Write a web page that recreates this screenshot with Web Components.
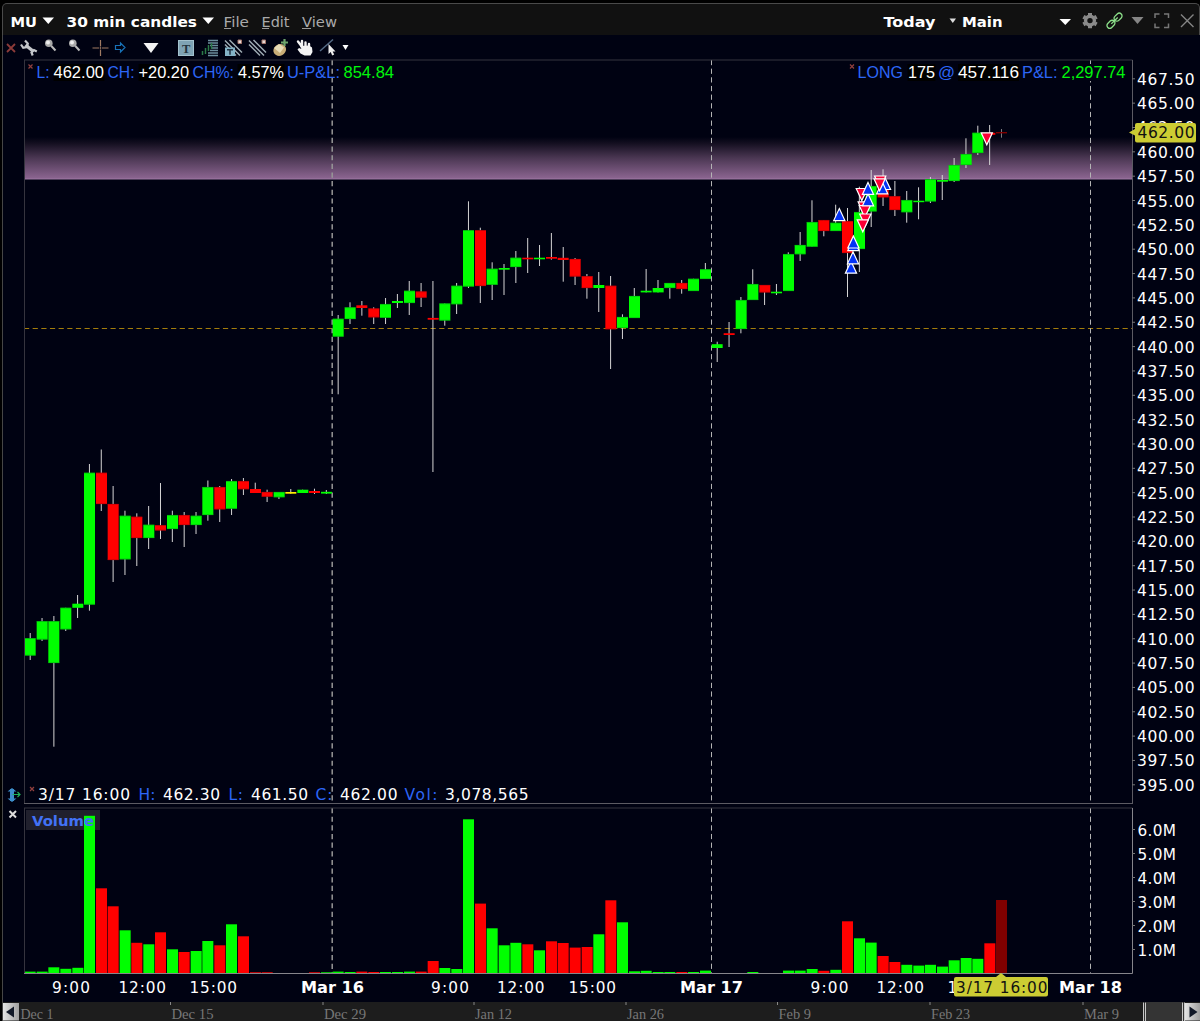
<!DOCTYPE html>
<html lang="en">
<head>
<meta charset="utf-8">
<title>MU 30 min candles</title>
<style>
html, body {
    margin: 0;
    background: #000;
    overflow: hidden;
}
</style>
</head>
<body>
<chart-window>
    <title-bar slot="title"></title-bar>
    <tool-bar slot="tools"></tool-bar>
    <price-pane slot="price"></price-pane>
    <volume-pane slot="volume"></volume-pane>
    <time-axis slot="time"></time-axis>
    <range-strip slot="range"></range-strip>
</chart-window>

<script>
// first candle centre and distance between candles
const X0 = 30.2;
const STEP = 11.845;

const SANS = "'DejaVu Sans', Verdana, sans-serif";
const ARIAL = "'Liberation Sans', Arial, sans-serif";

// [colour, body top, body bottom, high, low, volume bar height]
const candles = [
    ["g", 638.2, 655.5, 633, 660, 1.7],
    ["g", 621.2, 639.5, 618, 641, 1.7],
    ["g", 621.2, 663, 616, 746.7, 6],
    ["g", 607.8, 629.3, 607.8, 631, 4.5],
    ["g", 603.7, 607.8, 595, 618, 5.5],
    ["g", 472.8, 604.6, 464, 610.7, 157.5],
    ["r", 472.8, 504, 449.5, 511, 85],
    ["r", 504, 560, 486, 582, 67],
    ["g", 515.8, 559.3, 510.7, 575, 43],
    ["r", 516.8, 538, 513.3, 566, 30.5],
    ["g", 524.8, 538, 506, 549, 29],
    ["r", 525.2, 530.4, 483, 539, 41],
    ["g", 515.1, 529, 510.7, 542, 24],
    ["r", 515.1, 525, 512, 547, 21.3],
    ["g", 515.8, 525, 512, 534, 22.3],
    ["g", 487.1, 515, 480.5, 520.7, 32.3],
    ["r", 487.1, 509.3, 486, 522, 28],
    ["g", 481.1, 508.7, 479, 515, 49],
    ["r", 481.1, 489.2, 478, 495, 37],
    ["r", 489, 493, 482.7, 493, 1],
    ["r", 492, 496.7, 489.7, 502, 1],
    ["g", 492, 497.2, 492, 499, 0],
    ["y", 492, 493.7, 489, 493.7, 0],
    ["g", 489.7, 493, 489.7, 493, 0],
    ["r", 491, 493, 488.7, 494, 1],
    ["g", 491.8, 493.6, 490, 494, 1],
    ["g", 318.8, 336.6, 315, 394.3, 1.7],
    ["g", 307.4, 319, 302.3, 324, 1.3],
    ["r", 305.3, 308, 301, 315.7, 1.7],
    ["r", 308.5, 317.3, 307.3, 324, 1.3],
    ["g", 304.1, 317.8, 298, 324, 1.3],
    ["g", 301, 303, 294, 308, 1.3],
    ["g", 290.8, 303, 281, 315, 1.7],
    ["r", 291.5, 297.6, 283, 307, 1.7],
    ["r", 317.9, 319.7, 281, 472, 12.3],
    ["g", 303.5, 320.5, 303.5, 325.7, 5.3],
    ["g", 285.8, 304.2, 283, 314, 4.3],
    ["g", 230.2, 286.5, 201.3, 288, 154],
    ["r", 230.2, 286, 227.7, 303, 69.7],
    ["g", 268.8, 284.8, 262.3, 300, 45],
    ["g", 268, 269.7, 264, 295, 28],
    ["g", 257.8, 267, 251, 283, 30.5],
    ["r", 257.7, 259.3, 238, 273, 29],
    ["g", 257.7, 259.3, 245, 266, 23],
    ["r", 257, 258.7, 233, 259.7, 32],
    ["r", 257.8, 260, 247, 281.7, 30.3],
    ["r", 259, 276.5, 258, 285, 25.7],
    ["r", 276.2, 288, 274, 298.7, 26.3],
    ["g", 285, 288, 272, 312, 39],
    ["r", 285.8, 329.2, 276, 369, 73],
    ["g", 317, 328, 314.3, 339, 51],
    ["g", 296, 318, 288, 318, 2],
    ["g", 290.7, 292.4, 269, 292.4, 2.5],
    ["g", 288, 292.4, 280, 292.4, 1.3],
    ["g", 283, 288, 283, 298.7, 1.3],
    ["r", 283, 289, 280, 293.7, 1.3],
    ["g", 278.8, 291, 278.8, 291, 1.3],
    ["g", 269.3, 279, 263, 279, 2.7],
    ["g", 344.2, 348, 341.7, 362, 0],
    ["r", 333.2, 335, 322, 347, 0],
    ["g", 300.1, 329, 297, 333.3, 0],
    ["g", 284.1, 300, 269.3, 300, 1.3],
    ["r", 285, 292.4, 285, 305, 0],
    ["g", 291.7, 293.3, 284, 295, 0],
    ["g", 254.1, 291, 252.3, 291, 2.7],
    ["g", 245, 254.2, 232, 261, 2.7],
    ["g", 222.1, 246.7, 200.3, 246.7, 4.3],
    ["r", 220.1, 231, 220.1, 236.3, 2.5],
    ["g", 222.8, 231, 204.7, 231, 3.5],
    ["r", 221.1, 253, 208, 297, 52],
    ["g", 212.1, 249, 186.7, 272, 35],
    ["g", 186.1, 211.4, 170, 227, 30.7],
    ["r", 184.5, 197.3, 169.3, 206, 17.3],
    ["r", 196.2, 210, 181, 216, 11.3],
    ["g", 200.1, 212.2, 191, 222.7, 8.5],
    ["g", 200.7, 202.2, 187.3, 219.3, 7.7],
    ["g", 179.3, 201.4, 177, 203, 8.5],
    ["g", 180, 181.7, 175, 200, 6.7],
    ["g", 165.1, 181, 158, 182, 13],
    ["g", 154.1, 165, 138.3, 168, 15.3],
    ["g", 132.8, 153, 125.7, 155, 14.5],
    ["r", 132.8, 134.8, 125, 165, 30],
    ["d", 132, 133.4, 129, 137.7, 73.3]
];

const fills = { g: "#00ff00", r: "#ff0000", y: "#ffee00", d: "#800000" };
const edges = { g: "#00ab10", r: "#b00008", y: "#c8b400", d: "#800000" };

// executed orders: [side, centre x, top]
const trades = [
    ["sell", 861.8, 188.5], ["sell", 863.7, 201.8], ["sell", 864.8, 205.5],
    ["sell", 865.3, 214], ["sell", 862.8, 219.8],
    ["buy", 868, 193.8], ["buy", 868, 182.4],
    ["buy", 885, 177.5], ["buy", 882.2, 181.8],
    ["sell", 880.2, 176], ["sell", 879.6, 178.8],
    ["buy", 839.3, 208.6], ["buy", 851, 261.2], ["buy", 853, 251.8],
    ["buy", 853.4, 238.6], ["buy", 853.4, 236],
    ["sell", 986.8, 132.8]
];

const dayLines = [332.2, 711.5, 1090.5];

const label = (x, y, w, txt, fill = "#fff", extra = "") =>
    `<text x="${x}" y="${y}" textLength="${w}" lengthAdjust="spacingAndGlyphs" fill="${fill}" ${extra}>${txt}</text>`;

// keeps the glyph width and only opens the spacing
const spaced = (x, y, w, txt, fill = "#fff") =>
    `<text x="${x}" y="${y}" textLength="${w}" fill="${fill}">${txt}</text>`;

const verticals = (y1, y2) => dayLines.map((x, i) =>
    `<line x1="${x}" x2="${x}" y1="${y1}" y2="${y2}" stroke="${i ? "#b4b4b4" : "#979797"}" stroke-width="${i ? 1 : 1.5}" stroke-dasharray="5.2 3.45"/>`
).join("");

const closeMark = (x, y, s = 4, c = "#91403f") =>
    `<path d="M${x} ${y}l${s} ${s}m0 -${s}l-${s} ${s}" stroke="${c}" stroke-width="1.2" fill="none"/>`;

const barLeft = (i) => Math.round((X0 + STEP * i - 5.4) * 3) / 3;

class ChartWindow extends HTMLElement {
    constructor() {
        super();
        this.attachShadow({ mode: "open" }).innerHTML = `
        <style>
        :host {
            display: grid;
            grid-template-rows: 31px 24px 746px 169px 28px 20px;
            box-sizing: border-box;
            width: 1200px;
            height: 1021px;
            padding-top: 3px;
            background: linear-gradient(90deg, #000 2px, #464646 2px, #464646 3px, #000212 3px);
            box-shadow: inset 0 3px #000;
            overflow: hidden;
        }
        </style>
        <slot name="title"></slot>
        <slot name="tools"></slot>
        <slot name="price"></slot>
        <slot name="volume"></slot>
        <slot name="time"></slot>
        <slot name="range"></slot>
        `;
    }
}
customElements.define("chart-window", ChartWindow);

class TitleBar extends HTMLElement {
    constructor() {
        super();
        this.attachShadow({ mode: "open" }).innerHTML = `
        <style>
        :host {
            display: block;
            background: #000;
            height: 31px;
        }
        .bar {
            display: flex;
            align-items: center;
            box-sizing: border-box;
            margin-left: 2px;
            height: 32px;
            padding: 0 4px 0 8px;
            background: #111;
            border: 1px solid #4a4a4a;
            border-bottom: 0;
            border-radius: 5px 5px 0 0;
        }
        svg { display: block; flex: none; }
        text { font: 14.8px ${SANS}; }
        .b { font-weight: bold; }
        </style>
        <div class="bar">
            <svg width="330" height="30" viewBox="11 4 330 30">
                ${label(10.5, 25.5, 26.5, "MU", "#fff", 'class="b"')}
                <path d="M42.5 16.500h11.500l-5.700 6.500z" fill="#fff"/>
                ${label(66.5, 25.5, 130.5, "30 min candles", "#fff", 'class="b"')}
                <path d="M202.5 16.500h11.500l-5.700 6.500z" fill="#fff"/>
                ${label(223.5, 25.7, 25.5, "File", "#aaa")}
                ${label(261.5, 25.7, 28, "Edit", "#aaa")}
                ${label(302, 25.7, 35, "View", "#aaa")}
                <path d="M224 27.5h7M262 27.5h7M302 27.5h9" stroke="#999"/>
            </svg>
            <svg style="margin-left:auto" width="316" height="30" viewBox="879 4 316 30">
                ${label(883.5, 26, 52, "Today", "#fff", 'class="b"')}
                <path d="M949.5 17.5h6.5l-3.2 4.500z" fill="#ddd"/>
                ${label(962, 26, 40.5, "Main", "#fff", 'class="b"')}
                <path d="M1059.5 18h11.5l-5.7 6z" fill="#fff"/>
                <g transform="translate(1090 19.6)">
                    <circle r="4.4" fill="none" stroke="#8a8a8a" stroke-width="3.4"/>
                    <path d="M0 -5.5v-2.1M0 5.5v2.1M4.8 -2.75l1.8 -1.05M-4.8 2.75l-1.8 1.05M4.8 2.75l1.8 1.05M-4.8 -2.75l-1.8 -1.05" stroke="#8a8a8a" stroke-width="4"/>
                </g>
                <g transform="translate(1114.5 19.7) rotate(-45)" fill="none" stroke="#8ce08a" stroke-width="1.3">
                    <rect x="-9.5" y="-2.8" width="9" height="5.6" rx="2.8"/>
                    <rect x=".5" y="-2.8" width="9" height="5.6" rx="2.8"/>
                    <path d="M-4.5 0h9"/>
                </g>
                <path d="M1131.5 16h12l-6 7z" fill="#858585"/>
                <path d="M1155 17v-4h4.5M1164 13h4.5v4M1168.5 22.5v4h-4.5M1159.5 26.5h-4.5v-4" fill="none" stroke="#777" stroke-width="1.5"/>
                <path d="M1181 13.5l12.5 12.5M1193.5 13.5l-12.5 12.5" stroke="#858585" stroke-width="1.4"/>
            </svg>
        </div>
        `;
    }
}
customElements.define("title-bar", TitleBar);

class ToolBar extends HTMLElement {
    constructor() {
        super();
        this.attachShadow({ mode: "open" }).innerHTML = `
        <style>
        :host { display: flex; height: 24px; padding-left: 4px; }
        svg { display: block; flex: none; }
        </style>
        <svg width="360" height="24" viewBox="4 34 360 24" fill="none">
            <path d="M7 44l8 8M15 44l-8 8" stroke="#8c3b39" stroke-width="1.8"/>
            <path d="M25.5 45l8 6.500" stroke="#c4c7cb" stroke-width="3.4"/>
            <path d="M25 40.500l2.800 3 -.8 3.500 -3.800 .8 -2.200-3.300" stroke="#c4c7cb" stroke-width="2.2"/>
            <path d="M36.800 51.500l-2.800-1.500 -2.500 2.500 1.200 3" stroke="#c4c7cb" stroke-width="2.2"/>
            <g id="z1">
                <circle cx="48.8" cy="43.2" r="3.8" fill="#aaa"/>
                <circle cx="48" cy="42.5" r="2" fill="#ededed"/>
                <path d="M51.3 46l4.200 4.500" stroke="#bbb" stroke-width="2"/>
            </g>
            <use href="#z1" x="24"/>
            <path d="M92.5 48h6.5M102 48h6.5M100.5 40v6.5M100.500 49.500v6.500" stroke="#a07b63" stroke-width="1.2"/>
            <circle cx="100.5" cy="48" r=".8" fill="#c9a083"/>
            <path d="M115.5 45.500h5v-2.500l4.5 4.5 -4.5 4.500v-2.500h-5z" stroke="#1772b8" stroke-width="1.2"/>
            <path d="M143.500 43h15l-7.500 10z" fill="#f4f4f4"/>
            <rect x="178.500" y="40.500" width="15" height="15" fill="#7fa3b4" stroke="#a3c2ce"/>
            <text x="182" y="52.5" font-family="Liberation Serif, serif" font-weight="bold" font-size="12.5" fill="#23343d">T</text>
            <path d="M208 40.5h10M208 43h10M210 45.5h8M211 48h7M210 50.5h8M208 53h10M208 55.5h10" stroke="#6c8f9d" stroke-width="1.3"/>
            <path d="M202.5 51v4M205.5 48v6M208.5 45v6M211.5 43v6" stroke="#2b7a48" stroke-width="1.5"/>
            <g id="st" stroke="#9eabb3" stroke-width="1.5">
                <path d="M225 44.5l11 11M225 40.5l15 15M229.5 40l12.500 12.500"/>
                <path d="M238 40h3.500v3.500h-3.500z" stroke="#a5766c" stroke-width="1" fill="#e5d9d5"/>
            </g>
            <use href="#st" x="24"/>
            <rect x="225" y="47.5" width="10" height="8.500" fill="#84b3c7"/>
            <path d="M227 49.7h6M230 49.7v5" stroke="#234" stroke-width="1.5"/>
            <path d="M274 48c2-3.500 6-5 9-3.500s4 5 2 8 -6 4.500-9 2.500 -3-4.500-2-7z" fill="#c8ad77"/>
            <path d="M274 48l5-4 5 3.500 -4 5.500z" fill="#e8dcb7"/>
            <path d="M284.5 39v7M281 42.5h7" stroke="#6da36b" stroke-width="2.2"/>
            <path d="M298 41.500l4.500 6M302 41v6M305.500 42.500v5M309 44v5" stroke="#f4f4f4" stroke-width="2.400" stroke-linecap="round"/>
            <path d="M300 46l9-.5 3 2 .5 4.500 -2 3.500h-6l-4-2 -3-4 1.500-1.500 2.500 1z" fill="#f4f4f4"/>
            <path d="M320 51l13-11.5" stroke="#536a85" stroke-width="1.5"/>
            <path d="M328.5 44v10l2.200-2 1.500 3.500 2-1 -1.500-3h2.800z" fill="#eee"/>
            <path d="M342.5 45h6l-3 5z" fill="#fff"/>
        </svg>
        `;
    }
}
customElements.define("tool-bar", ToolBar);

class PricePane extends HTMLElement {
    constructor() {
        super();
        this.attachShadow({ mode: "open" });
        this.render();
    }

    drawCandles() {
        return candles.map(([c, top, bottom, high, low], i) => {
            const x = X0 + STEP * i;
            const left = barLeft(i);
            const wick = c === "d" ? "#7b7b80" : "#d5d5d5";
            const thin = bottom - top < 4.5;
            return `<line x1="${x}" x2="${x}" y1="${high}" y2="${low}" stroke="${wick}"/>
            <rect x="${left}" y="${top}" width="11" height="${bottom - top}" fill="${fills[c]}"/>
            ${thin ? "" : `<path d="M${left} ${top + .3}h11M${left} ${bottom - .3}h11" stroke="${edges[c]}" stroke-width=".6"/>`}`;
        }).join("");
    }

    drawTrades() {
        return trades.map(([side, x, y]) => side === "buy"
            ? `<path d="M${x} ${y}l5.6 12h-11.2z" fill="#0433f5"/>`
            : `<path d="M${x - 5.6} ${y}h11.2l-5.6 12z" fill="#fb0035"/>`
        ).join("");
    }

    drawAxis() {
        let out = "";
        for (let i = 0; i < 30; i++) {
            const y = 78.8 + i * 24.345;
            out += `<line x1="1132" x2="1135" y1="${y}" y2="${y}" stroke="#777"/>`;
            out += spaced(1137, y + 6, 57.5, (467.5 - i * 2.5).toFixed(2));
        }
        return out;
    }

    render() {
        this.shadowRoot.innerHTML = `
        <style>
        :host { display: flex; height: 746px; }
        svg { display: block; flex: none; overflow: visible; }
        text { font: 15.5px ${SANS}; }
        .ar { font: 16.3px ${ARIAL}; }
        </style>
        <svg width="1133" height="746" viewBox="0 58 1133 746">
            <defs>
                <linearGradient id="zone" x2="0" y2="1">
                    <stop offset="0" stop-color="#000212"/>
                    <stop offset=".15" stop-color="#140f20"/>
                    <stop offset=".5" stop-color="#4b3753"/>
                    <stop offset="1" stop-color="#8d6692"/>
                </linearGradient>
            </defs>
            <rect x="24" y="137" width="1108.5" height="42" fill="url(#zone)"/>
            <path d="M24 179h1108.5" stroke="#9c78a2"/>
            <path d="M24 328.5h1108.5" stroke="#a37d0b" stroke-dasharray="5.2 3.45"/>
            ${verticals(60, 803)}
            <g fill="#000">
                <rect x="53.5" y="64" width="51" height="17"/>
                <rect x="138.5" y="64" width="51" height="17"/>
                <rect x="237.5" y="64" width="47" height="17"/>
                <rect x="907.5" y="64" width="28" height="17"/>
                <rect x="958" y="64" width="61" height="17"/>
            </g>
            <rect x="1061" y="64" width="65" height="17" fill="#000212"/>
            ${closeMark(28.5, 64.5)}
            ${label(36.5, 77.5, 13, "L:", "#2d66f6", 'class="ar"')}
            ${label(53.5, 77.5, 50.5, "462.00", "#fff", 'class="ar"')}
            ${label(107.5, 77.5, 27, "CH:", "#2d66f6", 'class="ar"')}
            ${label(138.5, 77.5, 50.5, "+20.20", "#fff", 'class="ar"')}
            ${label(192.5, 77.5, 41.5, "CH%:", "#2d66f6", 'class="ar"')}
            ${label(238, 77.5, 46, "4.57%", "#fff", 'class="ar"')}
            ${label(287, 77.5, 53, "U-P&amp;L:", "#2d66f6", 'class="ar"')}
            ${label(343.5, 77.5, 50.5, "854.84", "#00f50a", 'class="ar"')}
            ${closeMark(850, 64.5)}
            ${label(857.5, 77.5, 45.5, "LONG", "#2d66f6", 'class="ar"')}
            ${label(908, 77.5, 27, "175", "#fff", 'class="ar"')}
            ${label(938, 77.5, 17, "@", "#2d66f6", 'class="ar"')}
            ${label(958, 77.5, 61, "457.116", "#fff", 'class="ar"')}
            ${label(1022, 77.5, 35.5, "P&amp;L:", "#2d66f6", 'class="ar"')}
            ${label(1061.5, 77.5, 64, "2,297.74", "#00f50a", 'class="ar"')}
            ${closeMark(30, 787)}
            ${spaced(38, 800, 92, "3/17 16:00")}
            ${spaced(138.5, 800, 17, "H:", "#2d66f6")}
            ${spaced(163, 800, 57, "462.30")}
            ${spaced(228.5, 800, 14.5, "L:", "#2d66f6")}
            ${spaced(251, 800, 57, "461.50")}
            ${spaced(315.5, 800, 17, "C:", "#2d66f6")}
            ${spaced(340, 800, 57.5, "462.00")}
            ${spaced(404.5, 800, 33, "Vol:", "#2d66f6")}
            ${spaced(445, 800, 83.5, "3,078,565")}
            ${this.drawCandles()}
            <g stroke="#fff" stroke-width="1.2">${this.drawTrades()}</g>
            <path d="M24.5 804V60M24 60h1108.5" fill="none" stroke="#35343e"/>
            <path d="M1132.5 60V804M24 803.5h1109" fill="none" stroke="#5c5b63"/>
            <path d="M12 789v12" stroke="#3d8fcc" stroke-width="4"/>
            <path d="M7.500 791.500l4.500-3.500 4.500 3.500zM7.500 798.500l4.500 3.500 4.500-3.500z" fill="#3d8fcc"/>
            <path d="M12.5 794.5h8M17.500 792l2.500 2.500 -2.500 2.500" stroke="#1fb25a" stroke-width="1.2" fill="none"/>
        </svg>
        <svg width="67" height="746" viewBox="1133 58 67 746">
            ${this.drawAxis()}
            <path d="M1137 123h57a2 2 0 0 1 2 2v15.500a2 2 0 0 1 -2 2h-57a2 2 0 0 1 -2-2v-5l-6-3 6-3.500v-4a2 2 0 0 1 2-2z" fill="#cccc33"/>
            ${spaced(1137.5, 138.3, 57, "462.00", "#111")}
        </svg>
        `;
    }
}
customElements.define("price-pane", PricePane);

class VolumePane extends HTMLElement {
    constructor() {
        super();
        const bars = candles.map(([c, , , , , h], i) => h
            ? `<rect x="${barLeft(i)}" y="${973.3 - h}" width="11" height="${h}" fill="${fills[c]}"/>`
            : ""
        ).join("");
        const ticks = [6, 5, 4, 3, 2, 1].map((v, i) => {
            const y = 829.5 + i * 24;
            return `<line x1="1132" x2="1135" y1="${y}" y2="${y}" stroke="#777"/>` +
                spaced(1137.5, y + 6.9, 38.5, v.toFixed(1) + "M");
        }).join("");
        this.attachShadow({ mode: "open" }).innerHTML = `
        <style>
        :host { display: block; height: 169px; }
        svg { display: block; overflow: visible; }
        text { font: 15.3px ${SANS}; }
        .name { font: bold 14px ${SANS}; }
        </style>
        <svg width="1200" height="169" viewBox="0 804 1200 169">
            <path d="M9.5 811l6.5 6.5M16 811l-6.5 6.5" stroke="#ddd" stroke-width="2"/>
            <rect x="26" y="810" width="74" height="20" fill="#20202d"/>
            ${verticals(808, 973)}
            ${bars}
            ${label(32, 825.5, 62, "Volume", "#4272f6", 'class="name"')}
            <path d="M24.5 973V808M24 808h1108.5" fill="none" stroke="#35343e"/>
            <path d="M1132.5 808V973.5H24" fill="none" stroke="#86858b"/>
            ${ticks}
        </svg>
        `;
    }
}
customElements.define("volume-pane", VolumePane);

class TimeAxis extends HTMLElement {
    constructor() {
        super();
        const hours = [
            [52, 38, "9:00"], [118.5, 47.5, "12:00"], [189.5, 47.5, "15:00"],
            [431, 38, "9:00"], [497, 47.5, "12:00"], [568.5, 47.5, "15:00"],
            [810.5, 38, "9:00"], [876.5, 47.5, "12:00"], [947.5, 47.5, "15:00"]
        ];
        const days = [[301, "Mar 16"], [680, "Mar 17"], [1059, "Mar 18"]];
        this.attachShadow({ mode: "open" }).innerHTML = `
        <style>
        :host { display: block; height: 28px; }
        svg { display: block; overflow: visible; }
        text { font: 15.3px ${SANS}; }
        .day { font-weight: bold; }
        </style>
        <svg width="1200" height="28" viewBox="0 973 1200 28">
            ${hours.map(([x, w, t]) => spaced(x, 992.8, w, t)).join("")}
            ${days.map(([x, t]) => label(x, 992.8, 63, t, "#fff", 'class="day"')).join("")}
            <path d="M956 977h40l5-4 5 4h40a2 2 0 0 1 2 2v15.500a2 2 0 0 1 -2 2h-90a2 2 0 0 1 -2-2v-15.500a2 2 0 0 1 2-2z" fill="#cccc33"/>
            ${spaced(956, 992.8, 91.5, "3/17 16:00", "#111")}
        </svg>
        `;
    }
}
customElements.define("time-axis", TimeAxis);

class RangeStrip extends HTMLElement {
    constructor() {
        super();
        const dates = [
            [20.5, 33, "Dec 1"], [171.5, 42, "Dec 15"], [324, 42, "Dec 29"],
            [475, 37, "Jan 12"], [627, 37, "Jan 26"], [778.5, 32.5, "Feb 9"],
            [931, 39, "Feb 23"], [1084, 35, "Mar 9"]
        ];
        this.attachShadow({ mode: "open" }).innerHTML = `
        <style>
        :host { display: block; height: 20px; }
        svg { display: block; }
        text { font: 14.5px 'Liberation Serif', 'Times New Roman', serif; }
        </style>
        <svg width="1200" height="20" viewBox="0 1001 1200 20">
            <defs>
                <linearGradient id="btn">
                    <stop offset="0" stop-color="#e4e4e4"/>
                    <stop offset="1" stop-color="#a0a0a0"/>
                </linearGradient>
            </defs>
            <rect x="3" y="1002" width="1197" height="19" fill="#1d1d1d"/>
            ${dates.map(([x, w, t]) => label(x, 1018.5, w, t, "#777")).join("")}
            ${dates.slice(1).map(([x]) => `<path d="M${x - 1} 1002v3" stroke="#888"/>`).join("")}
            <rect x="3" y="1003" width="16" height="17.5" fill="url(#btn)"/>
            <path d="M14 1006.5v11l-8-5.5z" fill="#111827"/>
            <rect x="1146" y="1002" width="36" height="19" fill="#343434"/>
            <path d="M1143.5 1021v-18.500M1145.500 1021v-18.500M1182.500 1021v-18.500M1184.500 1021v-18.500" stroke="#c8c8c8"/>
            <path d="M1144.500 1021v-18.500M1183.500 1021v-18.500" stroke="#333"/>
            <rect x="1185" y="1003" width="15" height="17.5" fill="url(#btn)"/>
            <path d="M1189.5 1006.5v11l8-5.5z" fill="#111827"/>
        </svg>
        `;
    }
}
customElements.define("range-strip", RangeStrip);
</script>
</body>
</html>
